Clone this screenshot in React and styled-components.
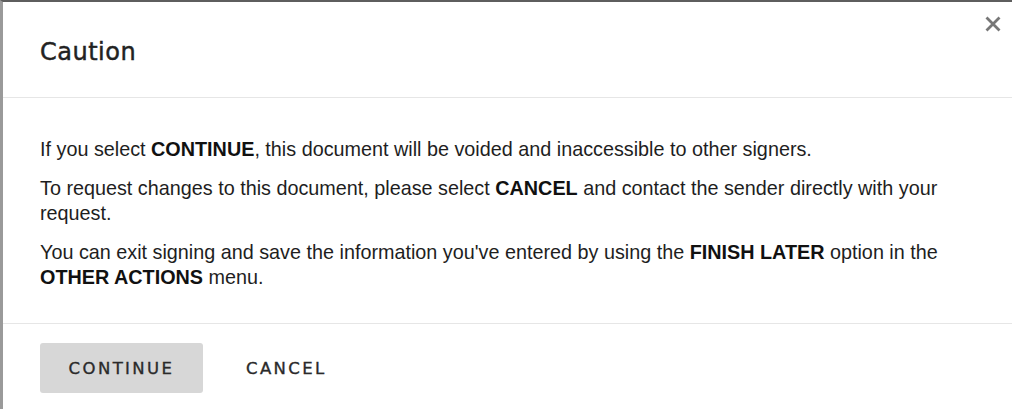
import React from "react";
import styled, { createGlobalStyle } from "styled-components";

const Global = createGlobalStyle`
  html, body { margin: 0; padding: 0; background: #fff; }
  body { width: 1012px; height: 409px; overflow: hidden; }
`;

const Dialog = styled.div`
  position: relative;
  box-sizing: border-box;
  width: 1012px;
  height: 409px;
  background: #fff;
  border-top: 2px solid #5e5e5e;
  border-left: 3px solid #9a9a9a;
  display: flex;
  flex-direction: column;
`;

const Header = styled.div`
  box-sizing: border-box;
  height: 96px;
  padding: 0 0 0 37px;
  display: flex;
  align-items: center;
  border-bottom: 1px solid #e6e6e6;
`;

const Title = styled.h2`
  margin: 0;
  margin-top: 4px;
  font-family: "DejaVu Sans", sans-serif;
  font-weight: 500;
  font-size: 24px;
  letter-spacing: 0.5px;
  color: #222;
  -webkit-text-stroke: 0.45px #222;
`;

const Close = styled.button`
  position: absolute;
  top: 11px;
  right: 8px;
  width: 22px;
  height: 22px;
  padding: 0;
  border: 0;
  background: transparent;
  display: flex;
  align-items: center;
  justify-content: center;
  cursor: pointer;
`;

const Body = styled.div`
  box-sizing: border-box;
  padding: 39px 37px 0;
  height: 226px;
  border-bottom: 1px solid #e6e6e6;
`;

const Para = styled.p`
  margin: 0 0 14px;
  font-family: "Liberation Sans", Arial, sans-serif;
  font-size: 19.8px;
  line-height: 25px;
  color: #1e1e1e;
  b { font-weight: 700; color: #111; }
`;

const Footer = styled.div`
  display: flex;
  align-items: center;
  padding: 19px 0 0 37px;
`;

const Button = styled.button`
  box-sizing: border-box;
  height: 50px;
  min-width: ${(p) => (p.$primary ? "163px" : "auto")};
  padding: 0 ${(p) => (p.$primary ? "26px" : "43px")};
  border: 0;
  border-radius: 3px;
  background: ${(p) => (p.$primary ? "#d7d7d7" : "transparent")};
  font-family: "DejaVu Sans", sans-serif;
  font-size: 16.5px;
  font-weight: 500;
  letter-spacing: 2.4px;
  color: #2a2a2a;
  -webkit-text-stroke: 0.35px #2a2a2a;
  cursor: pointer;
`;

export default function App() {
  return (
    <>
      <Global />
      <Dialog>
        <Header>
          <Title>Caution</Title>
        </Header>
        <Close aria-label="Close">
          <svg width="16" height="16" viewBox="0 0 16 16">
            <path d="M1.5 1.5 L14.5 14.5 M14.5 1.5 L1.5 14.5" stroke="#777" strokeWidth="2.8" />
          </svg>
        </Close>
        <Body>
          <Para>
            If you select <b>CONTINUE</b>, this document will be voided and inaccessible to other signers.
          </Para>
          <Para>
            To request changes to this document, please select <b>CANCEL</b> and contact the sender directly with your request.
          </Para>
          <Para>
            You can exit signing and save the information you've entered by using the <b>FINISH LATER</b> option in the <b>OTHER ACTIONS</b> menu.
          </Para>
        </Body>
        <Footer>
          <Button $primary>CONTINUE</Button>
          <Button>CANCEL</Button>
        </Footer>
      </Dialog>
    </>
  );
}
